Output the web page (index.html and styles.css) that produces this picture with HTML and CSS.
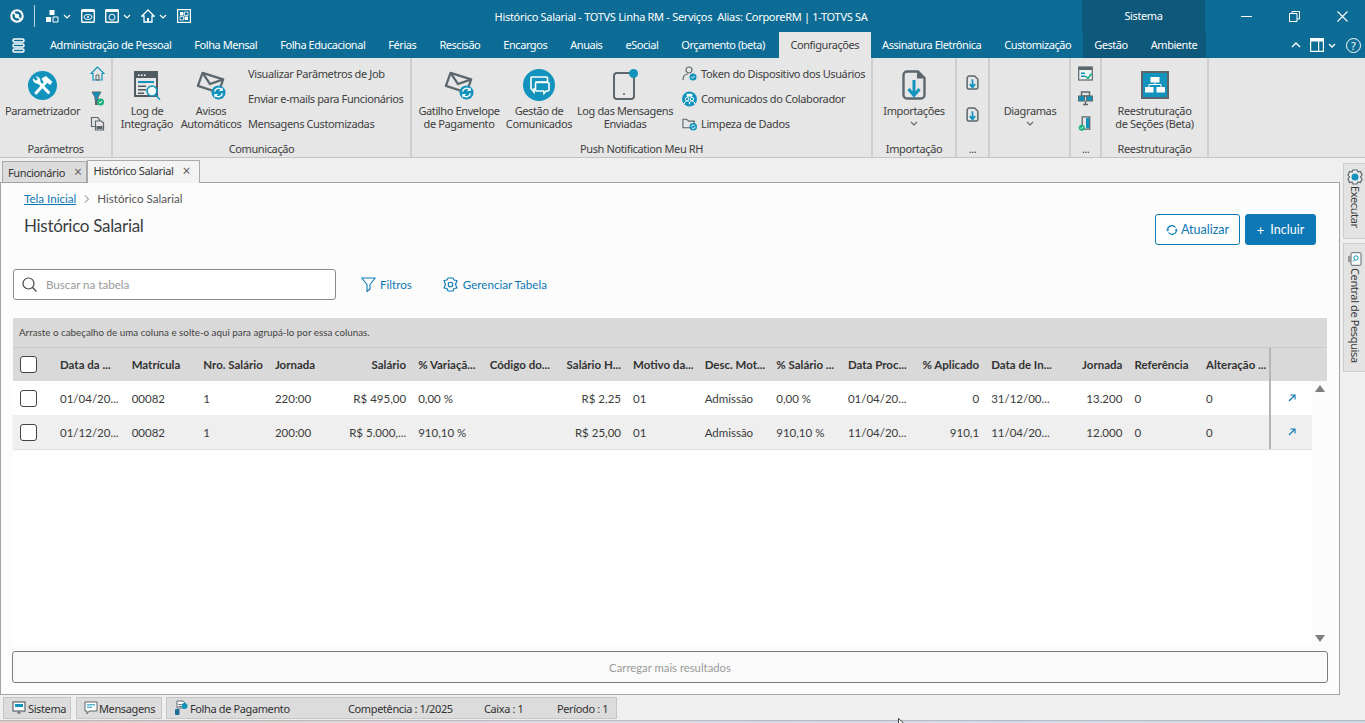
FILE: index.html
```html
<!DOCTYPE html>
<html lang="pt-BR">
<head>
<meta charset="utf-8">
<title>Histórico Salarial - TOTVS Linha RM</title>
<link rel="stylesheet" href="styles.css">
</head>
<body>
<svg class="defs" width="0" height="0" aria-hidden="true">
  <symbol id="env" viewBox="0 0 32 32">
    <g fill="#e6e6e6" stroke="#5b676c" stroke-width="2.400" stroke-linejoin="round"><path d="M7 3 29 10 24 24 2 17Z"/><path d="M7 3 15 15 29 10" fill="none"/></g>
    <circle cx="24" cy="24" r="7.500" fill="#1193bd"/>
    <path d="M19.800 23a4.400 4.400 0 0 1 7.700-2M28.200 25a4.400 4.400 0 0 1-7.700 2" fill="none" stroke="#fff" stroke-width="1.500"/>
    <path d="M28.500 18.500v4h-4zM19.500 29.500v-4h4z" fill="#fff"/>
  </symbol>
  <symbol id="doc" viewBox="0 0 12 14">
    <path d="M1 3a2 2 0 0 1 2-2h5l3 3v8a1 1 0 0 1-1 1H2a1 1 0 0 1-1-1Z" fill="none" stroke="#5b676c" stroke-width="1.400"/>
    <path d="M6 4v7M3.500 8.500 6 11.500l2.500-3" fill="none" stroke="#1193bd" stroke-width="1.600"/>
  </symbol>
</svg>

<header class="titlebar">
  <div class="qat">
    <svg width="14" height="14" viewBox="0 0 16 16"><circle cx="8" cy="8" r="6.500" fill="none" stroke="#fff" stroke-width="2.400"/><path d="M4 4l8 8" stroke="#fff" stroke-width="2"/><circle cx="8" cy="8" r="2.500" fill="#fff"/></svg>
    <span class="qat-sep"></span>
    <svg width="14" height="14" viewBox="0 0 14 14"><path d="M4.500 1h5v5h-5zM1 8h5v5H1z" fill="#fff"/><path d="M8 8h5v5H8z" fill="none" stroke="#fff"/></svg>
    <svg class="caret" width="8" height="5" viewBox="0 0 8 5"><path d="M1 1l3 3 3-3" fill="none" stroke="#fff" stroke-width="1.200"/></svg>
    <svg class="qat-gap" width="14" height="14" viewBox="0 0 14 14"><rect x=".7" y=".7" width="12.600" height="12.600" rx="1" fill="none" stroke="#fff" stroke-width="1.400"/><path d="M1 1h12v2H1z" fill="#fff"/><ellipse cx="7" cy="8" rx="4" ry="2.500" fill="none" stroke="#fff"/><circle cx="7" cy="8" r="1" fill="#fff"/></svg>
    <svg class="qat-gap" width="14" height="14" viewBox="0 0 14 14"><rect x=".7" y=".7" width="12.600" height="12.600" rx="1" fill="none" stroke="#fff" stroke-width="1.400"/><path d="M1 1h12v2H1z" fill="#fff"/><circle cx="7" cy="8.200" r="3" fill="none" stroke="#fff"/></svg>
    <svg class="caret" width="8" height="5" viewBox="0 0 8 5"><path d="M1 1l3 3 3-3" fill="none" stroke="#fff" stroke-width="1.200"/></svg>
    <svg class="qat-gap" width="14" height="14" viewBox="0 0 14 14"><path d="M7 1 1 7h2v6h8V7h2Z" fill="none" stroke="#fff" stroke-width="1.300"/><path d="M6 9h2v4H6z" fill="#fff"/></svg>
    <svg class="caret" width="8" height="5" viewBox="0 0 8 5"><path d="M1 1l3 3 3-3" fill="none" stroke="#fff" stroke-width="1.200"/></svg>
    <svg class="qat-gap" width="14" height="14" viewBox="0 0 14 14"><rect x=".6" y=".6" width="12.800" height="12.800" fill="none" stroke="#fff" stroke-width="1.200"/><path d="M3 3h3.500v3.500H3zM7.500 7.500H11V11H7.500z" fill="#fff"/><path d="M7.500 3H11v3.500H7.500zM3 7.500h3.500V11H3z" fill="none" stroke="#fff" stroke-width=".8"/></svg>
  </div>
  <div class="app-title">Histórico Salarial - TOTVS Linha RM - Serviços &nbsp;Alias: CorporeRM | 1-TOTVS SA</div>
  <div class="ctx-title">Sistema</div>
  <div class="winctl">
    <svg width="11" height="1" viewBox="0 0 11 1"><path d="M0 0h11v1H0z" fill="#fff"/></svg>
    <svg width="11" height="11" viewBox="0 0 11 11"><path d="M.5 2.500h7.500v8H.5zM3 2.500V.5h7.500V8H8" fill="none" stroke="#fff"/></svg>
    <svg width="11" height="11" viewBox="0 0 11 11"><path d="M.5.500l10 10M10.500.5l-10 10" stroke="#fff" stroke-width="1.100"/></svg>
  </div>
</header>

<nav class="menubar">
  <svg class="app-menu" width="13" height="15" viewBox="0 0 13 15"><g fill="none" stroke="#fff" stroke-width="1.500"><rect x="1" y="1" width="11" height="3" rx="1.500"/><rect x="1" y="6" width="11" height="3" rx="1.500"/><rect x="1" y="11" width="11" height="3" rx="1.500"/></g></svg>
  <span class="menu-item">Administração de Pessoal</span>
  <span class="menu-item">Folha Mensal</span>
  <span class="menu-item">Folha Educacional</span>
  <span class="menu-item">Férias</span>
  <span class="menu-item">Rescisão</span>
  <span class="menu-item">Encargos</span>
  <span class="menu-item">Anuais</span>
  <span class="menu-item">eSocial</span>
  <span class="menu-item">Orçamento (beta)</span>
  <span class="menu-item active">Configurações</span>
  <span class="menu-item">Assinatura Eletrônica</span>
  <span class="menu-item">Customização</span>
  <div class="menu-end">
    <div class="ctx-tabs">
      <span class="menu-item">Gestão</span>
      <span class="menu-item">Ambiente</span>
    </div>
    <div class="menu-tools">
      <svg width="10" height="6" viewBox="0 0 10 6"><path d="M1 5l4-4 4 4" fill="none" stroke="#fff" stroke-width="1.400"/></svg>
      <svg class="t-layout" width="14" height="14" viewBox="0 0 14 14"><rect x=".6" y=".6" width="12.800" height="12.800" fill="none" stroke="#fff" stroke-width="1.200"/><path d="M1 1h12v2.500H1zM8 3h1.200v10H8z" fill="#fff"/></svg>
      <svg class="t-caret" width="8" height="5" viewBox="0 0 8 5"><path d="M1 1l3 3 3-3" fill="none" stroke="#fff" stroke-width="1.300"/></svg>
      <span class="help">?</span>
    </div>
  </div>
</nav>

<section class="ribbon">
  <div class="group g-param">
    <div class="group-body">
      <div class="big w-param">
        <span class="big-ico"><svg width="29" height="29" viewBox="0 0 29 29"><circle cx="14.500" cy="14.500" r="14.500" fill="#1193bd"/><path d="M8 22 19 10M20.500 21.500 9.500 10" stroke="#fff" stroke-width="3" stroke-linecap="round"/><path d="M13.500 7.500 18 5l6.500 6-2.500 3-3-2.500-2.500 1.500Z" fill="#fff"/><path d="M5.500 7.500 8 10l2-2-2.500-2.500a4.500 4.500 0 0 1 5 5l-2 2a4.500 4.500 0 0 1-5.500-5.500Z" fill="#fff"/></svg></span>
        <span>Parametrizador</span>
      </div>
      <div class="stack icons-only">
        <svg width="15" height="15" viewBox="0 0 15 15"><path d="M7.500 1 1 7.500h2V14h9V7.500h2Z" fill="none" stroke="#1193bd" stroke-width="1.200"/><path d="M6 9h3v5H6z" fill="none" stroke="#5b676c"/></svg>
        <svg width="15" height="15" viewBox="0 0 15 15"><path d="M2 1h9L8 6v3H5V6Z" fill="#1193bd" stroke="#5b676c"/><path d="M5 9h3v5H5z" fill="#5b676c"/><circle cx="10.500" cy="11" r="3.500" fill="#1ab27c"/><path d="M8.800 11l1.200 1.200 2-2.200" fill="none" stroke="#fff"/></svg>
        <svg width="15" height="15" viewBox="0 0 15 15"><path d="M1.500 1.500h6l2 2v7h-8z" fill="#e6e6e6" stroke="#5b676c" stroke-width="1.200"/><path d="M5.500 5h6l2 2v7h-8z" fill="#e6e6e6" stroke="#5b676c" stroke-width="1.200"/><path d="M6.500 10h6v3h-6z" fill="#5b676c"/></svg>
      </div>
    </div>
    <div class="group-label">Parâmetros</div>
  </div>

  <div class="group g-comun">
    <div class="group-body">
      <div class="big w-log">
        <span class="big-ico"><svg width="27" height="29" viewBox="0 0 27 29"><rect x="1" y="1" width="22" height="24" fill="#e6e6e6" stroke="#4f5b60" stroke-width="2"/><path d="M2 2h20v5H2z" fill="#4f5b60"/><path d="M4 3.500h1.600v1.600H4zM7 3.500h1.600v1.600H7zM10 3.500h1.600v1.600H10z" fill="#fff"/><path d="M4 10h16v2H4z" fill="#1193bd"/><path d="M4 14.500h8V16H4zM4 18h8v1.500H4zM4 21.500h6V23H4z" fill="#4f5b60"/><circle cx="18" cy="20" r="5" fill="#f2fafc" stroke="#1193bd" stroke-width="1.600"/><path d="M21.500 24l4.500 4.500" stroke="#1193bd" stroke-width="1.600"/></svg></span>
        <span>Log de<br>Integração</span>
      </div>
      <div class="big w-avisos">
        <span class="big-ico"><svg width="30" height="30"><use href="#env"/></svg></span>
        <span>Avisos<br>Automáticos</span>
      </div>
      <div class="stack texts s-links">
        <span>Visualizar Parâmetros de Job</span>
        <span>Enviar e-mails para Funcionários</span>
        <span>Mensagens Customizadas</span>
      </div>
    </div>
    <div class="group-label">Comunicação</div>
  </div>

  <div class="group g-push">
    <div class="group-body">
      <div class="big w-gatilho">
        <span class="big-ico"><svg width="30" height="30"><use href="#env"/></svg></span>
        <span>Gatilho Envelope<br>de Pagamento</span>
      </div>
      <div class="big w-gestao">
        <span class="big-ico"><svg width="32" height="32" viewBox="0 0 32 32"><circle cx="16" cy="16" r="16" fill="#1193bd"/><path d="M8.500 8h15a1 1 0 0 1 1 1v4H13v7h-2v3l-3-3.500V9a1 1 0 0 1 .5-1Z" fill="none" stroke="#fff" stroke-width="1.600"/><path d="M13.500 13.500h11.500a1 1 0 0 1 1 1V21a1 1 0 0 1-1 1h-2l-2 2.500-.5-2.500h-7a1 1 0 0 1-1-1v-6.500a1 1 0 0 1 1-1Z" fill="#1193bd" stroke="#fff" stroke-width="1.600"/></svg></span>
        <span>Gestão de<br>Comunicados</span>
      </div>
      <div class="big w-logmsg">
        <span class="big-ico"><svg width="27" height="32" viewBox="0 0 27 32"><rect x="2" y="4" width="20" height="26" rx="3" fill="none" stroke="#5b676c" stroke-width="2"/><circle cx="12" cy="25" r="1" fill="#5b676c"/><circle cx="21.500" cy="4.500" r="4.500" fill="#1193bd"/></svg></span>
        <span>Log das Mensagens<br>Enviadas</span>
      </div>
      <div class="stack icon-list">
        <span class="li"><svg width="15" height="15" viewBox="0 0 15 15"><circle cx="7" cy="4" r="3" fill="none" stroke="#5b676c" stroke-width="1.200"/><path d="M1 14c0-4 2-6 5-6" fill="none" stroke="#5b676c" stroke-width="1.200"/><circle cx="11" cy="11" r="3.500" fill="#1193bd"/><path d="M9.300 11l1.200 1.200 2-2.200" fill="none" stroke="#fff"/></svg>Token do Dispositivo dos Usuários</span>
        <span class="li"><svg width="16" height="16" viewBox="0 0 16 16"><circle cx="8" cy="8" r="8" fill="#1193bd"/><circle cx="5.500" cy="8" r="1.800" fill="none" stroke="#fff"/><circle cx="10.500" cy="8" r="1.800" fill="none" stroke="#fff"/><path d="M2.500 13.500c0-2 1-3.500 3-3.500S8 11.500 8 13.500M8 13.500c0-2 .8-3.500 2.500-3.500s3 1.500 3 3.500" fill="none" stroke="#fff"/><path d="M5 2.500h6v3H5z" fill="#fff"/></svg>Comunicados do Colaborador</span>
        <span class="li"><svg width="16" height="15" viewBox="0 0 16 15"><path d="M1 3h4l2 2h6v7H1z" fill="none" stroke="#5b676c" stroke-width="1.200"/><circle cx="12" cy="11" r="4" fill="#1193bd"/><path d="M10 11a2 2 0 0 1 3.600-1M14 11a2 2 0 0 1-3.600 1" fill="none" stroke="#fff"/></svg>Limpeza de Dados</span>
      </div>
    </div>
    <div class="group-label">Push Notification Meu RH</div>
  </div>

  <div class="group g-import">
    <div class="group-body">
      <div class="big w-full">
        <span class="big-ico"><svg width="24" height="30" viewBox="0 0 24 30"><path d="M1.500 5a3.500 3.500 0 0 1 3.500-3.500h11L22.500 8v17a3.500 3.500 0 0 1-3.500 3.500H5A3.500 3.500 0 0 1 1.500 25Z" fill="none" stroke="#5b676c" stroke-width="2.400"/><path d="M15 1.500l7 7h-7z" fill="#5b676c"/><path d="M12 10v15M6.500 19l5.500 6.500 5.500-6.500" fill="none" stroke="#1193bd" stroke-width="3"/></svg></span>
        <span>Importações</span>
        <svg class="drop" width="8" height="5" viewBox="0 0 8 5"><path d="M1 1l3 3 3-3" fill="none" stroke="#5b676c" stroke-width="1.100"/></svg>
      </div>
    </div>
    <div class="group-label">Importação</div>
  </div>

  <div class="group g-more1">
    <div class="group-body two-icons">
      <svg width="13" height="15"><use href="#doc"/></svg>
      <svg width="13" height="15"><use href="#doc"/></svg>
    </div>
    <div class="group-label">...</div>
  </div>

  <div class="group g-diag">
    <div class="group-body">
      <div class="big w-full no-ico">
        <span>Diagramas</span>
        <svg class="drop" width="8" height="5" viewBox="0 0 8 5"><path d="M1 1l3 3 3-3" fill="none" stroke="#5b676c" stroke-width="1.100"/></svg>
      </div>
    </div>
  </div>

  <div class="group g-more2">
    <div class="group-body">
      <div class="stack icons-only full">
        <svg width="15" height="15" viewBox="0 0 15 15"><rect x=".7" y="1" width="13.600" height="13" fill="#eef3f4" stroke="#5b676c" stroke-width="1.200"/><path d="M1 1h13v3H1z" fill="#5b676c"/><path d="M3 6.500h4V8H3zM3 9.500h4V11H3z" fill="#1193bd"/><path d="M7.500 10l2.500 2.500 3.500-5" fill="none" stroke="#1ab27c" stroke-width="1.500"/></svg>
        <svg width="15" height="15" viewBox="0 0 15 15"><path d="M3.500 1h8v4h-8zM5 13.500h5M7.500 10v3.500" fill="none" stroke="#5b676c" stroke-width="1.400"/><rect x=".5" y="5" width="6" height="5" fill="#1193bd" stroke="#5b676c"/><rect x="8.500" y="5" width="6" height="5" fill="#1193bd" stroke="#5b676c"/></svg>
        <svg width="15" height="16" viewBox="0 0 15 16"><path d="M4 1h8v13H4z" fill="#e6e6e6" stroke="#5b676c" stroke-width="1.400"/><path d="M8 2h3.500v11H8z" fill="#1193bd"/><circle cx="3.500" cy="12.500" r="3.200" fill="#1ab27c"/><path d="M2 12.500l1 1 2-2" fill="none" stroke="#fff"/></svg>
      </div>
    </div>
    <div class="group-label">...</div>
  </div>

  <div class="group g-reest">
    <div class="group-body">
      <div class="big w-full">
        <span class="big-ico"><svg width="28" height="28" viewBox="0 0 28 28"><rect x="1" y="1" width="26" height="26" fill="#1193bd" stroke="#5b676c" stroke-width="2"/><path d="M9.500 6h9v5.500h-9zM4 16h8.500v5.500H4zM15.500 16H24v5.500h-8.500z" fill="#fff"/><path d="M14 11.500v2M8 16v-2.500h12V16" fill="none" stroke="#fff"/></svg></span>
        <span>Reestruturação<br>de Seções (Beta)</span>
      </div>
    </div>
    <div class="group-label">Reestruturação</div>
  </div>
</section>

<div class="workspace">
  <div class="doc-area">
    <div class="doc-tabs">
      <div class="doc-tab">Funcionário<span class="x">×</span></div>
      <div class="doc-tab current">Histórico Salarial<span class="x">×</span></div>
    </div>
    <main class="page">
      <div class="page-head">
        <div>
          <div class="crumbs"><a class="crumb-link">Tela Inicial</a><svg width="5" height="8" viewBox="0 0 5 8"><path d="M1 .5 4.500 4 1 7.500" fill="none" stroke="#777"/></svg><span>Histórico Salarial</span></div>
          <h1>Histórico Salarial</h1>
        </div>
        <div class="head-actions">
          <button class="btn btn-outline"><svg width="12" height="12" viewBox="0 0 12 12"><path d="M1.500 5.500a4.500 4.500 0 0 1 8-2M10.500 6.500a4.500 4.500 0 0 1-8 2" fill="none" stroke="#0c78b5" stroke-width="1.200"/><path d="M0 5.500h3.500L1.700 7.500zM12 6.500H8.500l1.800-2z" fill="#0c78b5"/></svg>Atualizar</button>
          <button class="btn btn-primary"><span class="plus">+</span>Incluir</button>
        </div>
      </div>

      <div class="toolbar">
        <div class="search"><svg width="15" height="15" viewBox="0 0 15 15"><circle cx="6.500" cy="6.500" r="5.500" fill="none" stroke="#444" stroke-width="1.200"/><path d="M10.500 10.500 14.500 14.500" stroke="#444" stroke-width="1.200"/></svg><span>Buscar na tabela</span></div>
        <a class="tool tool-filter"><svg width="15" height="15" viewBox="0 0 15 15"><path d="M.8 1h13.400L9 7.500V12l-3 2.500v-7Z" fill="none" stroke="#0c78b5" stroke-width="1.100" stroke-linejoin="round"/></svg>Filtros</a>
        <a class="tool tool-manage"><svg width="15" height="15" viewBox="0 0 15 15"><path d="M5 1h5l1 2 3 .5-1.500 4L14 11l-3 .5L10 14H5l-1-2.500L1 11l1.500-3.500L1 3.500 4 3Z" fill="none" stroke="#0c78b5" stroke-width="1.100" stroke-linejoin="round"/><circle cx="7.500" cy="7.500" r="2.300" fill="none" stroke="#0c78b5" stroke-width="1.100"/></svg>Gerenciar Tabela</a>
      </div>

      <div class="grid">
        <div class="group-hint">Arraste o cabeçalho de uma coluna e solte-o aqui para agrupá-lo por essa colunas.</div>
        <div class="row head">
          <span class="check-cell"><i class="check"></i></span>
          <span class="cell">Data da ...</span><span class="cell">Matrícula</span><span class="cell">Nro. Salário</span><span class="cell">Jornada</span><span class="cell num">Salário</span><span class="cell">% Variaçã...</span><span class="cell">Código do...</span><span class="cell num">Salário H...</span><span class="cell">Motivo da...</span><span class="cell">Desc. Mot...</span><span class="cell">% Salário ...</span><span class="cell">Data Proc...</span><span class="cell num">% Aplicado</span><span class="cell">Data de In...</span><span class="cell num">Jornada</span><span class="cell">Referência</span><span class="cell">Alteração ...</span>
          <span class="fix-cell"></span>
        </div>
        <div class="body-wrap">
          <div class="rows">
            <div class="row">
              <span class="check-cell"><i class="check"></i></span>
              <span class="cell">01/04/20...</span><span class="cell">00082</span><span class="cell">1</span><span class="cell">220:00</span><span class="cell num">R$ 495,00</span><span class="cell">0,00 %</span><span class="cell"></span><span class="cell num">R$ 2,25</span><span class="cell">01</span><span class="cell">Admissão</span><span class="cell">0,00 %</span><span class="cell">01/04/20...</span><span class="cell num">0</span><span class="cell">31/12/00...</span><span class="cell num">13.200</span><span class="cell">0</span><span class="cell">0</span>
              <span class="fix-cell"><svg width="8" height="8" viewBox="0 0 8 8"><path d="M1 7 7 1M2.500 1H7v4.500" fill="none" stroke="#0c78b5" stroke-width="1.100"/></svg></span>
            </div>
            <div class="row alt">
              <span class="check-cell"><i class="check"></i></span>
              <span class="cell">01/12/20...</span><span class="cell">00082</span><span class="cell">1</span><span class="cell">200:00</span><span class="cell num">R$ 5.000,...</span><span class="cell">910,10 %</span><span class="cell"></span><span class="cell num">R$ 25,00</span><span class="cell">01</span><span class="cell">Admissão</span><span class="cell">910,10 %</span><span class="cell">11/04/20...</span><span class="cell num">910,1</span><span class="cell">11/04/20...</span><span class="cell num">12.000</span><span class="cell">0</span><span class="cell">0</span>
              <span class="fix-cell"><svg width="8" height="8" viewBox="0 0 8 8"><path d="M1 7 7 1M2.500 1H7v4.500" fill="none" stroke="#0c78b5" stroke-width="1.100"/></svg></span>
            </div>
          </div>
          <div class="scroller"><i class="arrow-up"></i><i class="arrow-down"></i></div>
        </div>
      </div>
      <button class="load-more">Carregar mais resultados</button>
    </main>
  </div>
  <aside class="side">
    <div class="side-tab s-exec"><svg width="16" height="16" viewBox="0 0 16 16"><path d="M6 1h4l1 2 2.500-.5L15 6l-1.500 2L15 10l-1.500 3.500L11 13l-1 2H6l-1-2-2.500.5L1 10l1.500-2L1 6l1.500-3.500L5 3Z" fill="#eee" stroke="#5b676c" stroke-width="1.200"/><circle cx="8" cy="8" r="3.500" fill="#1193bd"/></svg><span>Executar</span></div>
    <div class="side-tab s-central"><svg width="14" height="14" viewBox="0 0 14 14"><rect x="3" y=".7" width="10" height="12.600" rx="1" fill="#fff" stroke="#5b676c"/><circle cx="8" cy="6" r="2.200" fill="none" stroke="#1193bd"/><path d="M6.500 7.800 5 9.500" stroke="#1193bd"/><path d="M0 4h3v6H0z" fill="#999"/></svg><span>Central de Pesquisa</span></div>
  </aside>
</div>

<footer class="statusbar">
  <div class="st-tab st-sistema"><svg width="14" height="14" viewBox="0 0 14 14"><rect x="1" y="1" width="12" height="9" fill="#fff" stroke="#5b676c" stroke-width="1.200"/><path d="M3 3h8v3H3z" fill="#1193bd"/><path d="M5 12h4M7 10v2" stroke="#5b676c" stroke-width="1.200"/></svg>Sistema</div>
  <div class="st-tab st-msg"><svg width="14" height="14" viewBox="0 0 14 14"><path d="M1 1h12v9H5l-2 3v-3H1z" fill="#fff" stroke="#5b676c"/><path d="M3 3h8v1.500H3zM3 5.500h5V7H3z" fill="#5fb6d3"/></svg>Mensagens</div>
  <div class="st-tab st-folha"><svg width="14" height="16" viewBox="0 0 14 16"><path d="M3 1h6l2 2v5H3z" fill="#fff" stroke="#5b676c"/><path d="M4.500 4h3v1h-3zM4.500 6h3v1h-3z" fill="#5b676c"/><circle cx="10.500" cy="6" r="3" fill="#1193bd"/><rect x="1" y="9" width="4.500" height="6" rx="1" fill="#1e6f96"/></svg><span class="st-name">Folha de Pagamento</span><span class="st-comp">Competência : 1/2025</span><span class="st-caixa">Caixa : 1</span><span>Período : 1</span></div>
</footer>
<div class="desktop-strip"><svg class="cursor" width="8" height="10" viewBox="0 0 8 10"><path d="M.5.500v8l2-2 1.500 3 1-.5-1.500-3H6.500Z" fill="#fff" stroke="#111" stroke-width=".8"/></svg></div>
</body>
</html>
```

FILE: styles.css
```css
* { box-sizing: border-box; }
html, body { margin: 0; height: 723px; overflow: hidden; }
body {
  width: 1365px;
  display: flex;
  flex-direction: column;
  background: #efefef;
  font-family: "Noto Sans", "Open Sans", sans-serif;
  font-size: 11px;
  letter-spacing: -.38px;
  color: #3f3f3f;
}
.defs { position: absolute; }
svg { display: block; flex: none; }

/* title bar */
.titlebar {
  height: 32px;
  display: flex;
  align-items: center;
  background: #0d6c96;
  color: #fff;
}
.qat { width: 280px; height: 100%; display: flex; align-items: center; padding-left: 10px; }
.qat-sep { width: 1px; height: 22px; margin: 0 10px; background: #b9d3df; }
.caret { margin-left: 4px; }
.qat-gap { margin-left: 10px; }
.app-title { flex: 1; text-align: center; white-space: nowrap; letter-spacing: -.3px; }
.ctx-title { width: 123px; height: 100%; line-height: 32px; text-align: center; background: #0e587b; }
.winctl { width: 160px; display: flex; align-items: center; padding-left: 36px; gap: 37px; }

/* menu */
.menubar {
  height: 26px;
  display: flex;
  align-items: stretch;
  background: #0d6c96;
  color: #fff;
  letter-spacing: -.45px;
}
.app-menu { align-self: center; margin: 0 13.500px 0 12px; }
.menu-item { padding: 0 11.500px; line-height: 26px; white-space: nowrap; }
.menu-item.active { margin-left: 2.500px; background: #e6e6e6; color: #404040; }
.menu-end { margin-left: auto; width: 283px; display: flex; }
.ctx-tabs { width: 123px; display: flex; background: #0e587b; }
.menu-tools { flex: 1; display: flex; align-items: center; padding-left: 85px; }
.t-layout { margin-left: 9px; }
.t-caret { margin-left: 4px; }
.help {
  width: 15px; height: 15px; margin-left: 10px;
  border: 1px solid #fff; border-radius: 50%;
  text-align: center; line-height: 13px; font-size: 11px;
}

/* ribbon */
.ribbon {
  height: 100px;
  display: flex;
  background: #e6e6e6;
  border-bottom: 1px solid #c4c4c4;
  color: #404040;
}
.group { display: flex; flex-direction: column; border-right: 2px solid #cfcfcf; }
.group-body { flex: 1; display: flex; min-height: 0; }
.group-label { height: 16px; text-align: center; line-height: 16px; white-space: nowrap; }
.g-param { width: 113px; }
.g-comun { width: 299px; }
.g-push { width: 461px; padding-left: 7px; }
.g-push .group-label { margin-left: -7px; }
.g-import { width: 84px; }
.g-more1 { width: 33px; }
.g-diag { width: 80px; border-right: 0; }
.g-more2 { width: 33px; border-left: 2px solid #cfcfcf; margin-left: -1px; }
.g-reest { width: 107px; }
.big {
  display: flex; flex-direction: column; align-items: center;
  padding-top: 8px; text-align: center; line-height: 13px; white-space: nowrap;
}
.big-ico { height: 38px; display: flex; justify-content: center; align-items: center; }
.w-param { width: 85px; }
.w-log { width: 68px; }
.w-avisos { width: 60px; }
.w-gatilho { width: 80px; }
.w-gestao { width: 64px; margin-left: 8px; }
.w-logmsg { width: 94px; margin-left: 7px; }
.w-full { width: 100%; }
.no-ico { padding-top: 46px; }
.drop { margin-top: 4px; }
.stack { display: flex; flex-direction: column; padding-top: 3px; }
.stack > * { height: 25px; }
.texts > span, .icon-list > span { display: flex; align-items: center; white-space: nowrap; }
.s-links { margin-left: 7px; }
.icons-only { width: 24px; align-items: center; padding-top: 8px; gap: 10px; }
.icons-only > * { height: 15px; }
.icons-only.full { width: 100%; padding-top: 8px; }
.icon-list { margin-left: 10px; }
.li svg { margin-right: 4px; width: 15px; }
.two-icons { flex-direction: column; align-items: center; padding-top: 17px; gap: 17px; }

/* workspace */
.workspace { height: 537px; display: flex; }
.doc-area { width: 1340px; display: flex; flex-direction: column; }
.doc-tabs { height: 24px; display: flex; align-items: flex-end; padding-left: 2px; }
.doc-tab {
  height: 21px; padding: 0 4px 0 5px;
  display: flex; align-items: center; white-space: nowrap;
  background: #dcdcdc; border: 1px solid #a9a9a9; border-bottom: 0;
  color: #333;
}
.doc-tab.current { height: 23px; padding: 0 9px 3px 6px; background: #f3f3f3; margin-bottom: -1px; position: relative; z-index: 1; }
.x { margin-left: 9px; font-size: 14px; line-height: 12px; color: #666; }
.page {
  flex: 1; min-height: 0;
  display: flex; flex-direction: column;
  background: #fcfcfc;
  border: 1px solid #a3a3a3;
  font-family: Lato, "Noto Sans", sans-serif;
  font-size: 11.600px;
  letter-spacing: 0;
  color: #3a3a3a;
}
.page-head { height: 86px; display: flex; justify-content: space-between; padding: 8px 23px 0 23px; }
.crumbs { display: flex; align-items: center; gap: 7px; height: 15px; font-size: 11.600px; color: #555; }
.crumb-link { color: #0c78b5; text-decoration: underline; }
.crumbs svg { margin: 0 1px; }
h1 { margin: 8px 0 0; font-size: 17px; line-height: 24px; font-weight: 400; letter-spacing: -.3px; color: #3a3f44; }
.head-actions { display: flex; gap: 5px; padding-top: 23px; }
.btn {
  height: 31px; border-radius: 3px; display: flex; align-items: center; justify-content: center;
  font: 400 12.500px Lato, sans-serif; padding: 0;
}
.btn-outline { width: 85px; gap: 3px; background: #fff; color: #0c78b5; border: 1px solid #0c78b5; }
.btn-primary { width: 71px; background: #0c78b5; color: #fff; border: 1px solid #0c78b5; }
.plus { margin-right: 6px; font-size: 13px; }

.toolbar { height: 31px; display: flex; align-items: center; padding-left: 12px; }
.search {
  width: 323px; height: 31px; display: flex; align-items: center; gap: 9px; padding-left: 8px;
  border: 1px solid #8c8c8c; border-radius: 3px; background: #fff; color: #9a9a9a;
}
.tool { display: flex; align-items: center; gap: 5px; color: #0c78b5; }
.tool-filter { margin-left: 25px; gap: 4px; }
.tool-manage { margin-left: 31px; }

.grid { flex: 1; min-height: 0; margin: 18px 12px 0; display: flex; flex-direction: column; }
.group-hint { height: 30px; line-height: 29px; padding-left: 6px; background: #d9d9d9; border-bottom: 1px solid #cbcbcb; font-size: 9.800px; color: #444; }
.row { height: 34px; display: flex; align-items: center; font-size: 11.500px; }
.row.head { height: 33px; background: #d9d9d9; font-weight: 700; color: #333; }
.row.alt { background: #efefef; box-shadow: 0 1px 1px #e2e2e2; }
.check-cell { width: 35px; display: flex; justify-content: center; padding-right: 4px; flex: none; }
.check { width: 17px; height: 17px; display: block; background: #fff; border: 1px solid #444; border-radius: 3px; }
.cell { width: 71.630px; flex: none; padding-left: 12px; white-space: nowrap; }
.cell.num { display: flex; justify-content: flex-end; }
.fix-cell {
  margin-left: auto; width: 43px; height: 100%;
  display: flex; align-items: center; justify-content: center;
  border-left: 2px solid #b5b5b5;
}
.head .fix-cell { width: 58px; }
.body-wrap { flex: 1; min-height: 0; display: flex; background: #fff; }
.rows { width: 1299px; }
.scroller { flex: 1; display: flex; flex-direction: column; justify-content: space-between; align-items: center; padding: 4px 0 3px; background: #fcfcfc; }
.arrow-up { width: 0; height: 0; border: 5px solid transparent; border-top: 0; border-bottom: 7px solid #7d7d7d; }
.arrow-down { width: 0; height: 0; border: 5px solid transparent; border-bottom: 0; border-top: 7px solid #7d7d7d; }
.load-more {
  height: 32px; margin: 6px 11px 11px; flex: none;
  background: #fafafa; border: 1px solid #7c7c7c; border-radius: 3px;
  font: 400 11.300px Lato, sans-serif; color: #9a9a9a;
}

/* side */
.side { flex: 1; display: flex; flex-direction: column; gap: 4px; padding: 5px 0 0 3px; }
.side-tab {
  width: 22px; display: flex; flex-direction: column; align-items: center;
  background: #e3e3e3; border: 1px solid #cdcdcd; border-right: 0; color: #3a3a3a;
}
.side-tab span { writing-mode: vertical-rl; white-space: nowrap; line-height: 16px; }
.s-exec { height: 76px; padding-top: 5px; gap: 1px; }
.s-central { height: 129px; padding-top: 8px; gap: 2px; }

/* status */
.statusbar { height: 25px; display: flex; gap: 4px; padding: 2px 0 1px 3px; align-items: stretch; }
.st-tab {
  display: flex; align-items: center; gap: 2px; padding-left: 7px;
  background: #dcdcdc; border: 1px solid #c6c6c6; color: #333; white-space: nowrap;
}
.st-sistema { width: 68px; padding-left: 8px; }
.st-msg { width: 86px; margin-left: 1px; padding-left: 7px; gap: 1px; }
.st-folha { width: 451px; }
.st-name { width: 156px; }
.st-comp { width: 134px; }
.st-caixa { width: 71px; }
.desktop-strip {
  flex: 1; position: relative;
  background: linear-gradient(90deg, #e8c9c0, #dcd6dc 30%, #d6dbe8 70%, #cdd6e8);
  border-top: 1px solid #b9b9c0;
}
.cursor { position: absolute; left: 898px; top: -3px; }
```
